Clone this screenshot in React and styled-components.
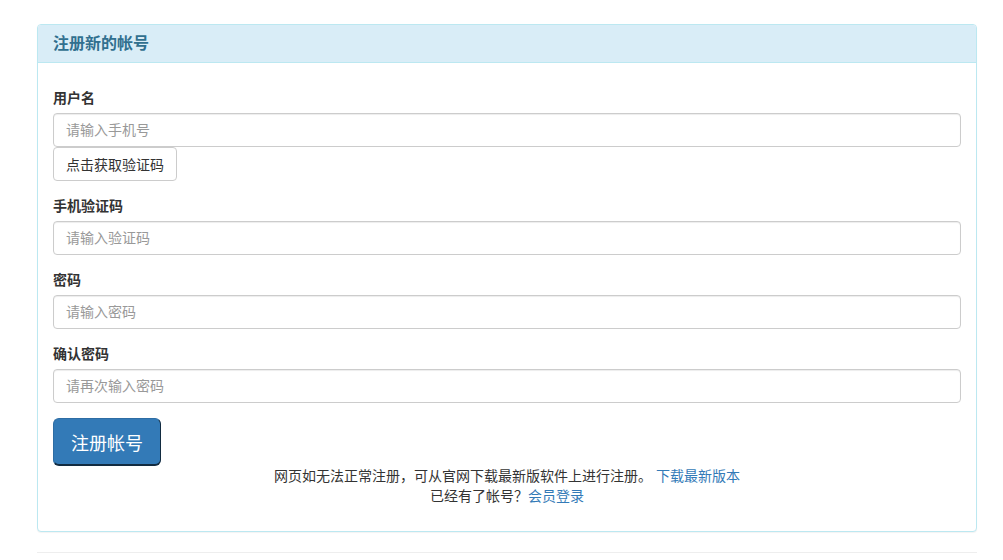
import React from 'react'
import styled, { createGlobalStyle } from 'styled-components'

const GlobalStyle = createGlobalStyle`
    * { box-sizing: border-box; }
    body {
        margin: 0;
        background: #fff;
        font-family: "Liberation Sans", "Noto Sans CJK SC", sans-serif;
        font-size: 14px;
        line-height: 20px;
        color: #333;
    }
    input::placeholder { color: #999; }
`

const fields = [
    { label: '手机验证码', placeholder: '请输入验证码' },
    { label: '密码', placeholder: '请输入密码', type: 'password' },
    { label: '确认密码', placeholder: '请再次输入密码', type: 'password' },
]

const App = () => {
    return (
        <Page>
            <GlobalStyle />
            <Panel>
                <PanelHeading>注册新的帐号</PanelHeading>
                <PanelBody>
                    <FormGroup>
                        <Label>用户名</Label>
                        <Input placeholder="请输入手机号" />
                        <SmallButton type="button">点击获取验证码</SmallButton>
                    </FormGroup>
                    {fields.map((f) => (
                        <FormGroup key={f.label}>
                            <Label>{f.label}</Label>
                            <Input type={f.type || 'text'} placeholder={f.placeholder} />
                        </FormGroup>
                    ))}
                    <SubmitButton type="button">注册帐号</SubmitButton>
                    <Notice>
                        网页如无法正常注册，可从官网下载最新版软件上进行注册。 <Link href="#">下载最新版本</Link>
                        <br />
                        已经有了帐号？<Link href="#">会员登录</Link>
                    </Notice>
                </PanelBody>
            </Panel>
            <Rule />
        </Page>
    )
}

export default App

const Page = styled.div`
    width: 940px;
    margin-left: 37px;
    padding-top: 24px;
`

const Panel = styled.div`
    border: 1px solid #bce8f1;
    border-radius: 4px;
    background: #fff;
    margin-bottom: 20px;
    box-shadow: 0 1px 1px rgba(0, 0, 0, 0.05);
`

const PanelHeading = styled.div`
    background: #d9edf7;
    color: #31708f;
    border-bottom: 1px solid #bce8f1;
    border-radius: 3px 3px 0 0;
    padding: 9px 15px 9px;
    font-size: 16px;
    font-weight: bold;
    line-height: 19px;
`

const PanelBody = styled.div`
    padding: 25px 15px 25px;
    display: flex;
    flex-direction: column;
`

const FormGroup = styled.div`
    display: flex;
    flex-direction: column;
    align-items: flex-start;
    margin-bottom: 15px;
`

const Label = styled.label`
    font-weight: bold;
    font-size: 14px;
    line-height: 20px;
    margin-bottom: 5px;
`

const Input = styled.input`
    width: 100%;
    height: 34px;
    padding: 6px 12px;
    font-size: 14px;
    font-family: inherit;
    color: #555;
    border: 1px solid #ccc;
    border-radius: 4px;
    box-shadow: inset 0 1px 1px rgba(0, 0, 0, 0.075);
    outline: none;
`

const SmallButton = styled.button`
    height: 34px;
    padding: 6px 12px;
    font-size: 14px;
    font-family: inherit;
    color: #333;
    background: #fff;
    border: 1px solid #ccc;
    border-radius: 4px;
    cursor: pointer;
`

const SubmitButton = styled.button`
    align-self: flex-start;
    width: 108px;
    height: 48px;
    padding: 10px 16px;
    font-size: 18px;
    font-family: inherit;
    color: #fff;
    background: #337ab7;
    border: 1px solid #2e6da4;
    border-right-color: #122b40;
    border-bottom: 2px solid #122b40;
    border-radius: 6px;
    cursor: pointer;
`

const Notice = styled.div`
    text-align: center;
    font-size: 14px;
    line-height: 20px;
`

const Link = styled.a`
    color: #337ab7;
    text-decoration: none;
`

const Rule = styled.hr`
    margin: 0;
    border: 0;
    border-top: 1px solid #eee;
`
